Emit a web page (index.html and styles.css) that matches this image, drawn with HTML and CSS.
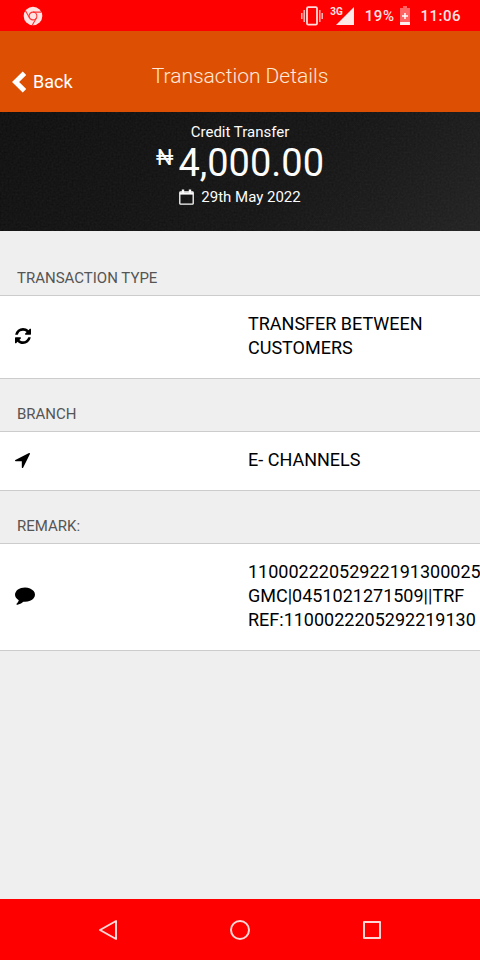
FILE: index.html
```html
<!DOCTYPE html>
<html lang="en">
<head>
<meta charset="utf-8">
<meta name="viewport" content="width=device-width, initial-scale=1">
<title>Transaction Details</title>
<link rel="stylesheet" href="styles.css">
</head>
<body>
<div class="status">
  <svg class="status-app" width="20" height="20" viewBox="0 0 20 20" aria-hidden="true">
    <circle cx="10" cy="10" r="9.3" fill="#ffe3e3"/>
    <g fill="none" stroke="#f33" stroke-width="1.1"><circle cx="10" cy="10" r="3.9"/><path d="M10 6.100H18.300M6.600 12 2.500 4.800M13.400 12l-4.200 7.300"/></g>
  </svg>
  <svg class="status-vibrate" width="22" height="20" viewBox="0 0 22 20" aria-hidden="true">
    <rect x="6" y="1.2" width="10" height="17.4" rx="1.2" fill="none" stroke="#ffdada" stroke-width="1.8"/>
    <path d="M3.2 4v12M18.8 4v12M.8 7v6M21.2 7v6" stroke="#ffc0c0" stroke-width="1.4"/>
  </svg>
  <div class="signal">
    <span class="network">3G</span>
    <svg width="18" height="18" viewBox="0 0 18 18" aria-hidden="true"><path d="M18 0v18H0z" fill="#ffe8e8"/></svg>
  </div>
  <span class="percent">19%</span>
  <svg class="battery" width="10" height="19" viewBox="0 0 10 19" aria-hidden="true">
    <path d="M3 0h4v2h3v17H0V2h3z" fill="#ff6464"/><path d="M0 16h10v3H0z" fill="#fff0f0"/><path d="M5 7v6M2 10h6" stroke="#fff" stroke-width="1.5"/>
  </svg>
  <time class="clock">11:06</time>
</div>
<header class="bar">
  <button class="back" type="button">
    <svg width="14" height="22" viewBox="0 0 14 22" aria-hidden="true"><path d="M12.500 2.200 3.600 11l8.900 8.800" fill="none" stroke="#fff" stroke-width="5"/></svg>
    Back
  </button>
  <h1 class="title">Transaction Details</h1>
</header>
<main class="content">
  <section class="summary">
    <svg class="grain" aria-hidden="true"><filter id="grain"><feTurbulence type="fractalNoise" baseFrequency="0.5" numOctaves="2"/><feColorMatrix type="saturate" values="0"/></filter><rect width="100%" height="100%" filter="url(#grain)"/></svg>
    <div class="kind">Credit Transfer</div>
    <div class="amount"><span class="currency">₦</span><span>4,000.00</span></div>
    <div class="date">
      <svg width="15" height="16" viewBox="0 0 15 16" fill="none" stroke="#fff" aria-hidden="true"><rect x=".8" y="3" width="13.4" height="12.2" rx=".8" stroke-width="1.3"/><path d="M.8 4.6h13.4" stroke-width="2"/><path d="M4 .5v4M11 .5v4" stroke-width="2.4"/></svg>
      <time datetime="2022-05-29">29th May 2022</time>
    </div>
  </section>
  <h2 class="label label-first">TRANSACTION TYPE</h2>
  <div class="row">
    <svg width="16" height="16" viewBox="0 128 1536 1536" aria-hidden="true"><path d="M1511 1056q0 5-1 7-64 268-268 434.500t-478 166.500q-146 0-282.500-55t-243.500-157l-129 129q-19 19-45 19t-45-19-19-45v-448q0-26 19-45t45-19h448q26 0 45 19t19 45-19 45l-137 137q71 66 161 102t187 36q134 0 250-65t186-179q11-17 53-117 8-23 30-23h192q13 0 22.500 9.500t9.500 22.500zm25-800v448q0 26-19 45t-45 19h-448q-26 0-45-19t-19-45 19-45l138-138q-148-137-349-137-134 0-250 65t-186 179q-11 17-53 117-8 23-30 23h-199q-13 0-22.500-9.500t-9.500-22.500v-7q65-268 270-434.500t480-166.500q146 0 284 55.500t245 156.500l130-129q19-19 45-19t45 19 19 45z"/></svg>
    <div class="value">TRANSFER BETWEEN CUSTOMERS</div>
  </div>
  <h2 class="label">BRANCH</h2>
  <div class="row">
    <svg width="15" height="15" viewBox="0 256 1408 1408" aria-hidden="true"><path d="M1401 349l-640 1280q-17 35-57 35-5 0-15-2-22-5-35.500-22.500t-13.500-39.500v-576h-576q-22 0-39.500-13.500t-22.500-35.500 4-42 29-30l1280-640q13-7 29-7 27 0 45 19 15 14 18.500 34.500t-6.500 39.500z"/></svg>
    <div class="value">E- CHANNELS</div>
  </div>
  <h2 class="label">REMARK:</h2>
  <div class="row">
    <svg width="20" height="18" viewBox="0 210 1792 1613" aria-hidden="true"><path d="M1792 896q0 174-120 321.500t-326 233-450 85.500q-70 0-145-8-198 175-460 242-49 14-114 22-17 2-30.500-9t-17.500-29v-1q-3-4-.5-12t2-10 4.500-9.500l6-9 7-8.500 8-9q7-8 31-34.500t34.500-38 31-39.500 32.500-51 27-59 26-76q-157-89-247.500-220t-90.500-281q0-130 71-248.500t191-204.500 286-136.500 348-50.500q244 0 450 85.500t326 233 120 321.500z"/></svg>
    <div class="value">11000222052922191300025 GMC|0451021271509||TRF REF:1100022205292219130</div>
  </div>
</main>
<nav class="system">
  <button type="button" aria-label="Back"><svg width="22" height="22" viewBox="0 0 22 22"><path d="M19 2v18L3 11z"/></svg></button>
  <button type="button" aria-label="Home"><svg width="22" height="22" viewBox="0 0 22 22"><circle cx="11" cy="11" r="9"/></svg></button>
  <button type="button" aria-label="Recent apps"><svg width="22" height="22" viewBox="0 0 22 22"><rect x="3" y="3" width="16" height="16"/></svg></button>
</nav>
</body>
</html>
```
FILE: styles.css
```css
* {
  box-sizing: border-box;
}

body {
  margin: 0;
  min-height: 100vh;
  display: flex;
  flex-direction: column;
  background: #efefef;
  color: #000;
  font-family: Roboto, "Noto Sans", sans-serif;
  font-size: 18px;
  line-height: 24px;
}

button {
  border: 0;
  padding: 0;
  background: none;
  color: inherit;
  font: inherit;
}

svg {
  display: block;
  flex: none;
}

.status {
  display: flex;
  align-items: center;
  height: 31px;
  padding: 0 19px 0 23px;
  background: #f00;
  color: #ffe3e3;
  font-size: 15px;
  font-weight: 500;
}

.status-app {
  margin-right: auto;
}

.signal {
  display: flex;
  align-items: center;
  margin: 0 11px 0 7px;
}

.network {
  align-self: flex-start;
  margin-right: -7px;
  font-size: 10px;
  font-weight: 700;
  line-height: 10px;
}

.battery {
  margin: 0 10px 0 6px;
}

.percent,
.clock {
  padding-top: 1px;
  letter-spacing: 0.5px;
}

.bar {
  display: grid;
  grid-template-columns: 1fr auto 1fr;
  align-items: center;
  height: 81px;
  padding: 20px 12px 0;
  background: #dd5004;
  color: #fff;
}

.back {
  display: flex;
  align-items: center;
  gap: 7px;
  justify-self: start;
}

.title {
  margin: 0 0 12px;
  color: #ffe9d8;
  font-size: 21px;
  font-weight: 300;
}

.content {
  overflow-x: hidden;
}

.summary {
  position: relative;
  display: flex;
  flex-direction: column;
  align-items: center;
  height: 119px;
  padding-top: 10px;
  background: linear-gradient(135deg, #0d0d0d, #131313 60%, #202020);
  color: #fff;
  font-size: 15px;
  line-height: 20px;
}

.grain {
  position: absolute;
  inset: 0;
  width: 100%;
  height: 100%;
  opacity: 0.08;
}

.amount {
  display: flex;
  gap: 5px;
  font-size: 38px;
  line-height: 42px;
}

.currency {
  font-size: 22px;
  line-height: 32px;
}

.date {
  display: flex;
  align-items: center;
  gap: 7px;
  padding-top: 3px;
}

.label {
  margin: 0;
  padding: 25px 17px 7px;
  color: #555;
  font-size: 15px;
  font-weight: 400;
  line-height: 20px;
}

.label-first {
  padding-top: 37px;
}

.row {
  display: grid;
  grid-template-columns: minmax(0, 1fr) minmax(0, 1fr);
  align-items: center;
  gap: 16px;
  padding: 16px 15px 18px;
  border: solid #ccc;
  border-width: 1px 0;
  background: #fff;
}

.system {
  display: grid;
  grid-template-columns: repeat(3, 132px);
  justify-content: center;
  height: 61px;
  margin-top: auto;
  background: #f00;
}

.system button {
  display: grid;
  place-items: center;
}

.system svg {
  fill: none;
  stroke: #ffd6d6;
  stroke-width: 2;
  stroke-linejoin: round;
}
```
